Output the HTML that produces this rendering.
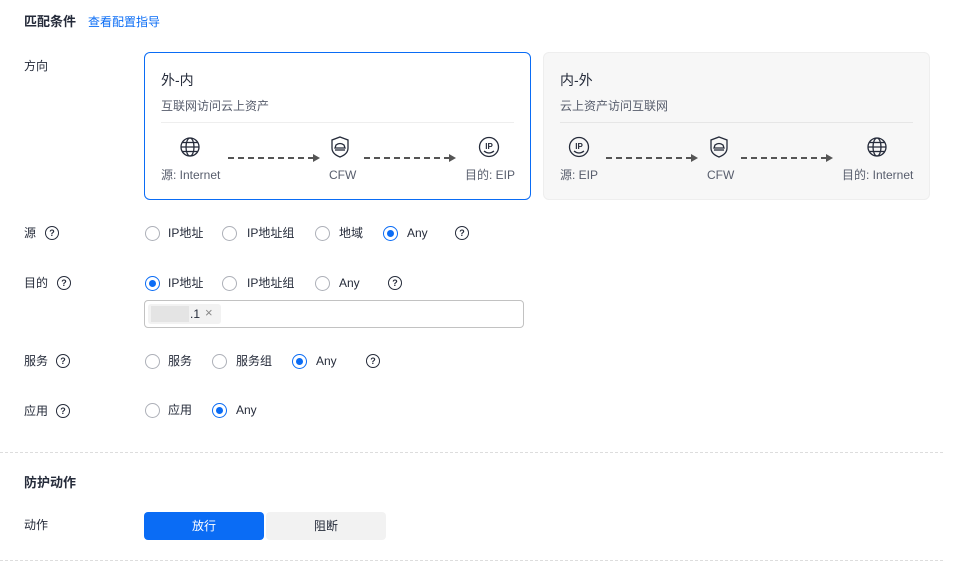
<!DOCTYPE html><html><head><meta charset="utf-8"><style>
*{margin:0;padding:0;box-sizing:border-box}
body{width:967px;height:563px;background:#fff;font-family:"Liberation Sans","Noto Sans CJK SC",sans-serif;font-size:12px;color:#252b3a;position:relative;overflow:hidden}
.a{position:absolute;white-space:nowrap}
.t{line-height:16px}
.card{position:absolute;top:52px;width:387px;height:148px;border-radius:6px}
.r{position:absolute;width:15px;height:15px;border:1px solid #adb0b8;border-radius:50%;background:#fff}
.r.on{border-color:#0a6cf5}
.r.on:after{content:"";position:absolute;left:3px;top:3px;width:7px;height:7px;border-radius:50%;background:#0a6cf5}
.q{position:absolute;width:14px;height:14px;border:1px solid #252b3a;border-radius:50%;font-size:9px;line-height:12px;text-align:center;font-weight:bold}
.dash{position:absolute;height:0;border-top:2px dashed #555}
.arr{position:absolute;width:0;height:0;border-left:7px solid #555;border-top:4px solid transparent;border-bottom:4px solid transparent}
.hr{position:absolute;left:0;width:943px;border-top:1px dashed #ddd}
</style></head><body>
<div class="a t" style="left:24px;top:14px;font-weight:bold;font-size:13px">匹配条件</div>
<div class="a t" style="left:88px;top:14px;color:#0a6cf5">查看配置指导</div>
<div class="a t" style="left:24px;top:58px">方向</div>

<div class="card" style="left:144px;border:1px solid #0a6cf5;background:#fff"></div>
<div class="card" style="left:543px;border:1px solid #eee;background:#f7f7f7"></div>
<div class="a t" style="left:161px;top:72px;font-size:14px">外-内</div>
<div class="a t" style="left:161px;top:98px;color:#575d6c">互联网访问云上资产</div>
<div class="a" style="left:161px;top:122px;width:353px;border-top:1px solid #eee"></div>
<div class="a t" style="left:560px;top:72px;font-size:14px">内-外</div>
<div class="a t" style="left:560px;top:98px;color:#575d6c">云上资产访问互联网</div>
<div class="a" style="left:560px;top:122px;width:353px;border-top:1px solid #e6e6e6"></div>

<svg class="a" style="left:0;top:0" width="967" height="200">
<defs>
<g id="globe" fill="none" stroke="#252b3a" stroke-width="1.3"><circle r="9"/><ellipse rx="4" ry="9"/><line x1="-9" x2="9"/><line x1="-8" x2="8" y1="-4.5" y2="-4.5"/><line x1="-8" x2="8" y1="4.5" y2="4.5"/></g>
<g id="ip" fill="none" stroke="#252b3a" stroke-width="1.3"><circle r="9.5"/><text x="0" y="2" font-size="8" font-weight="bold" text-anchor="middle" fill="#252b3a" stroke="none" font-family="Liberation Sans">IP</text><path d="M-5 4 Q0 8 5 4"/></g>
<g id="cfw" fill="none" stroke="#252b3a" stroke-width="1.3"><path d="M0 -10 L8 -7 L8 1 Q8 7 0 10 Q-8 7 -8 1 L-8 -7 Z"/><path d="M-5 1 L5 1 L4 -2 Q0 -5 -4 -2 Z"/><line x1="-5" x2="5" y1="3" y2="3"/></g>
</defs>
<use href="#globe" x="190" y="147"/><use href="#cfw" x="340" y="147"/><use href="#ip" x="489" y="147"/>
<use href="#ip" x="579" y="147"/><use href="#cfw" x="719" y="147"/><use href="#globe" x="877" y="147"/>
</svg>
<div class="dash" style="left:228px;top:157px;width:86px"></div><div class="arr" style="left:313px;top:154px"></div>
<div class="dash" style="left:364px;top:157px;width:86px"></div><div class="arr" style="left:449px;top:154px"></div>
<div class="dash" style="left:606px;top:157px;width:86px"></div><div class="arr" style="left:691px;top:154px"></div>
<div class="dash" style="left:741px;top:157px;width:86px"></div><div class="arr" style="left:826px;top:154px"></div>
<div class="a t" style="left:161px;top:167px;color:#575d6c">源: Internet</div>
<div class="a t" style="left:329px;top:167px;color:#575d6c">CFW</div>
<div class="a t" style="left:465px;top:167px;color:#575d6c">目的: EIP</div>
<div class="a t" style="left:560px;top:167px;color:#575d6c">源: EIP</div>
<div class="a t" style="left:707px;top:167px;color:#575d6c">CFW</div>
<div class="a t" style="left:842px;top:167px;color:#575d6c">目的: Internet</div>

<div class="a t" style="left:24px;top:225px">源</div><div class="q" style="left:45px;top:226px">?</div>
<div class="r" style="left:145px;top:226px"></div><div class="a t" style="left:168px;top:225px">IP地址</div>
<div class="r" style="left:222px;top:226px"></div><div class="a t" style="left:247px;top:225px">IP地址组</div>
<div class="r" style="left:315px;top:226px"></div><div class="a t" style="left:339px;top:225px">地域</div>
<div class="r on" style="left:383px;top:226px"></div><div class="a t" style="left:407px;top:225px">Any</div>
<div class="q" style="left:455px;top:226px">?</div>

<div class="a t" style="left:24px;top:275px">目的</div><div class="q" style="left:57px;top:276px">?</div>
<div class="r on" style="left:145px;top:276px"></div><div class="a t" style="left:168px;top:275px">IP地址</div>
<div class="r" style="left:222px;top:276px"></div><div class="a t" style="left:247px;top:275px">IP地址组</div>
<div class="r" style="left:315px;top:276px"></div><div class="a t" style="left:339px;top:275px">Any</div>
<div class="q" style="left:388px;top:276px">?</div>
<div class="a" style="left:144px;top:300px;width:380px;height:28px;border:1px solid #c2c2c2;border-radius:4px"></div>
<div class="a" style="left:148px;top:304px;width:73px;height:20px;background:#f2f2f2;border-radius:3px"></div>
<div class="a" style="left:151px;top:306px;width:38px;height:16px;background:#e4e4e4"></div>
<div class="a t" style="left:190px;top:306px">.1</div>
<div class="a t" style="left:205px;top:305px;color:#888;font-size:13px">×</div>

<div class="a t" style="left:24px;top:353px">服务</div><div class="q" style="left:56px;top:354px">?</div>
<div class="r" style="left:145px;top:354px"></div><div class="a t" style="left:168px;top:353px">服务</div>
<div class="r" style="left:212px;top:354px"></div><div class="a t" style="left:236px;top:353px">服务组</div>
<div class="r on" style="left:292px;top:354px"></div><div class="a t" style="left:316px;top:353px">Any</div>
<div class="q" style="left:366px;top:354px">?</div>

<div class="a t" style="left:24px;top:403px">应用</div><div class="q" style="left:56px;top:404px">?</div>
<div class="r" style="left:145px;top:403px"></div><div class="a t" style="left:168px;top:402px">应用</div>
<div class="r on" style="left:212px;top:403px"></div><div class="a t" style="left:236px;top:402px">Any</div>

<div class="hr" style="top:452px"></div>
<div class="a t" style="left:24px;top:475px;font-weight:bold;font-size:13px">防护动作</div>
<div class="a t" style="left:24px;top:517px">动作</div>
<div class="a" style="left:144px;top:512px;width:120px;height:28px;background:#0a6cf5;border-radius:4px;color:#fff;text-align:center;line-height:28px">放行</div>
<div class="a" style="left:266px;top:512px;width:120px;height:28px;background:#f2f2f2;border-radius:4px;text-align:center;line-height:28px">阻断</div>
<div class="hr" style="top:560px"></div>
</body></html>
